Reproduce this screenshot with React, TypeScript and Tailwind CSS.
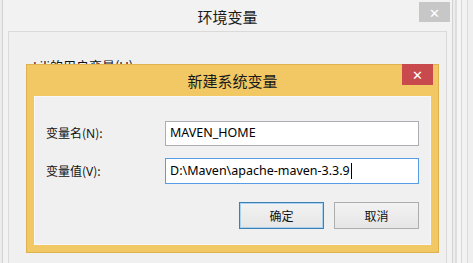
import React from "react";

const cjk = { fontFamily: '"Noto Sans CJK SC", "Noto Sans", sans-serif' };
const latin = { fontFamily: '"Noto Sans", "Noto Sans CJK SC", sans-serif' };

export default function App() {
  return (
    <div className="relative w-[473px] h-[263px] overflow-hidden bg-[#ececec]" style={cjk}>
      {/* far-right window frame stripes */}
      <div className="absolute left-[455px] top-0 h-full w-[18px] flex">
        <div className="w-[2px] h-full bg-[#dedede]" />
        <div className="w-[4px] h-full bg-[#f4f4f4]" />
        <div className="w-[1px] h-full bg-[#d8d8d8]" />
        <div className="w-[5px] h-full bg-[#f2f2f2]" />
        <div className="w-[1px] h-full bg-[#dcdcdc]" />
        <div className="flex-1 h-full bg-[#efefef]" />
      </div>

      {/* background window 环境变量 */}
      <div className="absolute left-[2px] top-[-1px] w-[451px] h-[270px] border border-[#d2d2d2] bg-[#f2f2f2] flex flex-col">
        <div className="relative h-[31px] flex items-center justify-center shrink-0">
          <span className="text-[15px] text-[#1a1a1a] leading-none mt-[2px]">环境变量</span>
          <div className="absolute right-[2px] top-[2px] w-[31px] h-[20px] bg-[#c7c7c7] flex items-center justify-center text-white text-[13px] leading-none">
            ✕
          </div>
        </div>
        <div className="flex-1 mx-[5px] border border-[#dadada] bg-[#f0f0f0] pl-[24px] pt-[27px]">
          <div className="text-[13px] text-[#111] leading-none">
            <span style={latin}>Lili</span>的用户变量(<span style={latin}>U</span>)
          </div>
        </div>
      </div>

      {/* foreground dialog 新建系统变量 */}
      <div className="absolute left-[26px] top-[64px] w-[413px] h-[189px] bg-[#f1c863] border border-[#e0b24e] flex flex-col">
        <div className="relative h-[31px] shrink-0 flex items-center justify-center">
          <span className="text-[15px] text-[#1a1a1a] leading-none">新建系统变量</span>
          <div className="absolute right-[5px] top-[-1px] w-[31px] h-[21px] bg-[#c84a4c] flex items-center justify-center text-white text-[13px] leading-none">
            ✕
          </div>
        </div>
        <div className="flex-1 mx-[7px] mb-[7px] bg-[#f0f0f0] border border-[#f8f8f8] pl-[11px] pr-[11px] pt-[24px] flex flex-col">
          <div className="flex items-center h-[25px]">
            <div className="w-[119px] text-[12px] text-[#111]">
              变量名(<span style={latin}>N</span>):
            </div>
            <div className="flex-1 h-[25px] bg-white border border-[#abadb3] flex items-center pl-[4px] text-[12.5px] text-black" style={latin}>
              MAVEN_HOME
            </div>
          </div>
          <div className="flex items-center h-[26px] mt-[12px]">
            <div className="w-[119px] text-[12px] text-[#111]">
              变量值(<span style={latin}>V</span>):
            </div>
            <div className="flex-1 h-[26px] bg-white border border-[#569de5] flex items-center pl-[4px] text-[12.5px] text-black" style={latin}>
              D:\Maven\apache-maven-3.3.9
              <span className="inline-block w-[1px] h-[16px] bg-black ml-[1px]" />
            </div>
          </div>
          <div className="flex justify-end gap-[10px] mt-[18px]">
            <div className="w-[85px] h-[27px] border border-[#3c7fb1] bg-gradient-to-b from-[#f2f2f2] to-[#e6e6e6] flex items-center justify-center text-[12px] text-[#111]">
              <div className="w-full h-full border border-[#a9d2f0] flex items-center justify-center">确定</div>
            </div>
            <div className="w-[85px] h-[27px] border border-[#adadad] bg-gradient-to-b from-[#f2f2f2] to-[#e6e6e6] flex items-center justify-center text-[12px] text-[#111]">
              取消
            </div>
          </div>
        </div>
      </div>
    </div>
  );
}
